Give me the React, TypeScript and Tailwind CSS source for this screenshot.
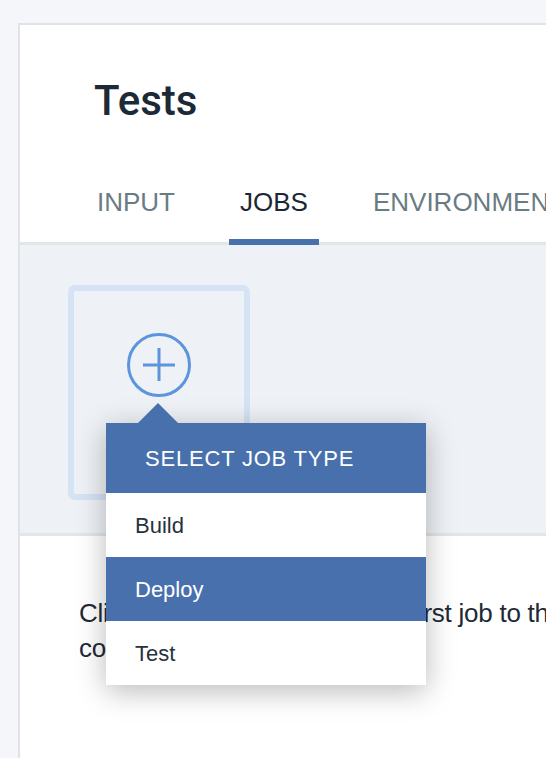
import React from "react";

function PlusCircle() {
  return (
    <svg width="64" height="64" viewBox="0 0 64 64" fill="none">
      <circle cx="32" cy="32" r="30.5" stroke="#5c94dd" strokeWidth="3" />
      <line x1="16" y1="32" x2="48" y2="32" stroke="#5c94dd" strokeWidth="3" />
      <line x1="32" y1="15" x2="32" y2="48" stroke="#5c94dd" strokeWidth="3" />
    </svg>
  );
}

export default function App() {
  const sans = { fontFamily: '"Liberation Sans", Arial, sans-serif' };
  return (
    <div
      className="w-[546px] h-[758px] overflow-hidden bg-[#f5f6f9] pt-[23px] pl-[18px]"
      style={sans}
    >
      <div className="w-[720px] h-[800px] bg-white border-l-2 border-t-2 border-[#dfe2e6] flex flex-col">
        {/* Header */}
        <div className="border-b-[3px] border-[#e2e6e9] pt-[55px]">
          <h1
            className="pl-[74px] text-[42px] leading-[42px] font-medium text-[#1b2a36]"
            style={{ fontFamily: 'Roboto, "Liberation Sans", sans-serif' }}
          >
            Tests
          </h1>
          <div className="flex gap-[43px] pl-[66px] mt-[67px] -mb-[3px]">
            <div className="px-[11px] pb-[24px] text-[26px] leading-[26px] text-[#6a7b83] border-b-[6px] border-transparent">
              INPUT
            </div>
            <div className="px-[11px] pb-[24px] text-[26px] leading-[26px] text-[#1c2833] border-b-[6px] border-[#4870ad]">
              JOBS
            </div>
            <div className="px-[11px] pb-[24px] text-[26px] leading-[26px] text-[#6a7b83] border-b-[6px] border-transparent whitespace-nowrap">
              ENVIRONMENT
            </div>
          </div>
        </div>

        {/* Jobs area */}
        <div className="h-[291px] bg-[#eef2f6] border-b-[3px] border-[#e2e6e9] pt-[40px] pl-[48px]">
          <div className="relative w-[182px] h-[215px] border-[6px] border-[#d6e3f5] rounded-[7px] flex justify-center pt-[42px]">
            <PlusCircle />
            {/* caret */}
            <div className="absolute left-[64px] top-[112px] w-0 h-0 border-l-[20px] border-r-[20px] border-b-[20px] border-l-transparent border-r-transparent border-b-[#4870ad] z-20" />
            {/* menu */}
            <div className="absolute left-[32px] top-[132px] w-[320px] bg-white shadow-[0_6px_28px_rgba(0,0,0,0.28)] z-10">
              <div className="h-[70px] bg-[#4870ad] flex items-center pl-[39px] text-white text-[22px] tracking-[0.8px]">
                SELECT JOB TYPE
              </div>
              <div className="h-[64px] flex items-center pl-[29px] text-[22px] text-[#27323d]">
                Build
              </div>
              <div className="h-[64px] flex items-center pl-[29px] text-[22px] text-white bg-[#4870ad]">
                Deploy
              </div>
              <div className="h-[64px] flex items-center pl-[29px] text-[22px] text-[#27323d]">
                Test
              </div>
            </div>
          </div>
        </div>

        {/* Description */}
        <div className="pt-[60px] pl-[59px]">
          <p className="w-[560px] text-[26px] leading-[35px] tracking-[-0.25px] text-[#1e2a35]">
            Click the plus icon to add the first job to the configuration.
          </p>
        </div>
      </div>
    </div>
  );
}
